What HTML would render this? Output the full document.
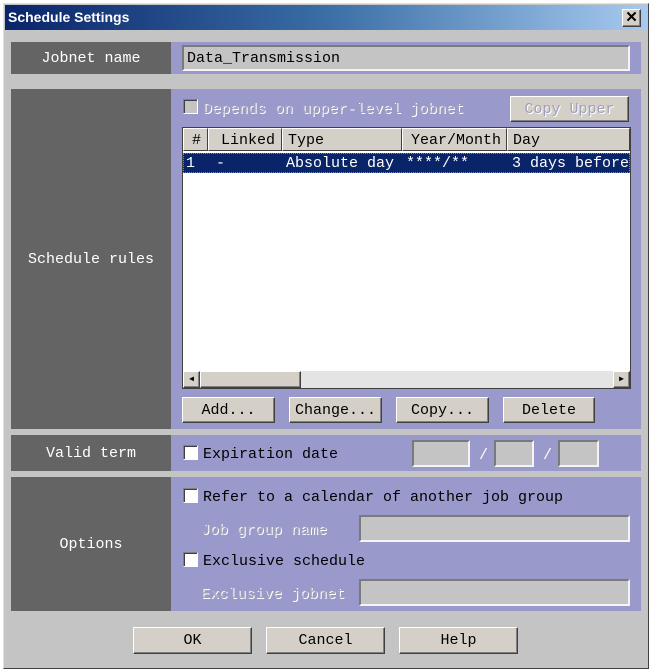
<!DOCTYPE html>
<html><head><style>
*{box-sizing:border-box;margin:0;padding:0}
body{width:653px;height:671px;background:#fff;position:relative;overflow:hidden;font-family:"Liberation Mono",monospace;font-size:15px}
.a{position:absolute}
.win{left:3px;top:3px;width:646px;height:666px;background:#c4c4c4;border:1px solid #e0e0e0;border-right-color:#404040;border-bottom-color:#404040}
.title{left:5px;top:5px;width:642px;height:25px;background:linear-gradient(90deg,#0a246a,#3a6ea5 50%,#a6caf0);color:#fff;font-family:"Liberation Sans",sans-serif;font-weight:bold;font-size:14px;line-height:25px;padding-left:3px}
.dark{background:#646464;color:#fff;text-align:center}
.pur{background:#9999cc}
.inp{background:#c4c4c4;border:2px solid;border-color:#7a7a7a #f4f4f4 #f4f4f4 #7a7a7a}
.btn{background:#d4d0c8;border:1px solid;border-color:#fff #404040 #404040 #fff;box-shadow:inset -1px -1px #808080;text-align:center;line-height:26px;color:#000}
.cb{width:15px;height:15px;background:#fff;border:1px solid;border-color:#808080 #fff #fff #808080;box-shadow:inset 1px 1px #404040}
.dis{text-shadow:1px 1px #fff;color:#a0a0b8}
.hd{top:128px;height:23px;background:#d4d0c8;border:1px solid;border-color:#fff #404040 #404040 #fff;line-height:23px;padding-left:5px}
.r{top:153px;line-height:22px;color:#fff}
</style></head><body>
<div class="a win"></div>
<div class="a title">Schedule Settings</div>
<div class="a btn" style="left:622px;top:9px;width:19px;height:18px;line-height:16px;font-family:'Liberation Sans',sans-serif;font-weight:bold;font-size:15px">✕</div>

<div class="a dark" style="left:11px;top:42px;width:160px;height:32px;line-height:34px">Jobnet name</div>
<div class="a pur" style="left:171px;top:42px;width:470px;height:32px"></div>
<div class="a inp" style="left:182px;top:45px;width:448px;height:26px;line-height:24px;padding-left:3px">Data_Transmission</div>

<div class="a dark" style="left:11px;top:89px;width:160px;height:340px;line-height:342px">Schedule rules</div>
<div class="a pur" style="left:171px;top:89px;width:470px;height:340px"></div>
<div class="a cb" style="left:183px;top:99px;background:#c4c4c4"></div>
<div class="a dis" style="left:203px;top:101px;line-height:17px">Depends on upper-level jobnet</div>
<div class="a btn dis" style="left:510px;top:96px;width:119px;height:26px">Copy Upper</div>
<div class="a" style="left:182px;top:127px;width:449px;height:262px;background:#fff;border:1px solid #404040"></div>
<div class="a hd" style="left:183px;width:25px;padding-left:8px">#</div>
<div class="a hd" style="left:208px;width:74px;padding-left:12px">Linked</div>
<div class="a hd" style="left:282px;width:120px">Type</div>
<div class="a hd" style="left:402px;width:105px;padding-left:8px">Year/Month</div>
<div class="a hd" style="left:507px;width:123px">Day</div>
<div class="a" style="left:183px;top:153px;width:447px;height:20px;background:#0a246a;border:1px dotted #c08040"></div>
<div class="a r" style="left:186px">1</div>
<div class="a r" style="left:216px">-</div>
<div class="a r" style="left:286px">Absolute day</div>
<div class="a r" style="left:406px">****/**</div>
<div class="a r" style="left:512px;width:118px;overflow:hidden;white-space:nowrap">3 days before</div>
<div class="a" style="left:183px;top:371px;width:447px;height:17px;background:#e4e4e4"></div>
<div class="a btn" style="left:183px;top:371px;width:17px;height:17px;font-size:8px;line-height:15px">◀</div>
<div class="a btn" style="left:200px;top:371px;width:101px;height:17px"></div>
<div class="a btn" style="left:613px;top:371px;width:17px;height:17px;font-size:8px;line-height:15px">▶</div>
<div class="a btn" style="left:182px;top:397px;width:93px;height:26px">Add...</div>
<div class="a btn" style="left:289px;top:397px;width:93px;height:26px">Change...</div>
<div class="a btn" style="left:396px;top:397px;width:93px;height:26px">Copy...</div>
<div class="a btn" style="left:503px;top:397px;width:92px;height:26px">Delete</div>

<div class="a dark" style="left:11px;top:435px;width:160px;height:36px;line-height:38px">Valid term</div>
<div class="a pur" style="left:171px;top:435px;width:470px;height:36px"></div>
<div class="a cb" style="left:183px;top:445px"></div>
<div class="a" style="left:203px;top:446px;line-height:17px">Expiration date</div>
<div class="a inp" style="left:412px;top:440px;width:58px;height:27px"></div>
<div class="a" style="left:479px;top:447px;color:#fff">/</div>
<div class="a inp" style="left:494px;top:440px;width:40px;height:27px"></div>
<div class="a" style="left:543px;top:447px;color:#fff">/</div>
<div class="a inp" style="left:558px;top:440px;width:41px;height:27px"></div>

<div class="a dark" style="left:11px;top:477px;width:160px;height:134px;line-height:136px">Options</div>
<div class="a pur" style="left:171px;top:477px;width:470px;height:134px"></div>
<div class="a cb" style="left:183px;top:488px"></div>
<div class="a" style="left:203px;top:489px;line-height:17px">Refer to a calendar of another job group</div>
<div class="a dis" style="left:201px;top:522px;line-height:17px">Job group name</div>
<div class="a inp" style="left:359px;top:515px;width:271px;height:27px"></div>
<div class="a cb" style="left:183px;top:552px"></div>
<div class="a" style="left:203px;top:553px;line-height:17px">Exclusive schedule</div>
<div class="a dis" style="left:201px;top:586px;line-height:17px">Exclusive jobnet</div>
<div class="a inp" style="left:359px;top:579px;width:271px;height:27px"></div>

<div class="a btn" style="left:133px;top:627px;width:119px;height:27px">OK</div>
<div class="a btn" style="left:266px;top:627px;width:119px;height:27px">Cancel</div>
<div class="a btn" style="left:399px;top:627px;width:119px;height:27px">Help</div>
</body></html>
